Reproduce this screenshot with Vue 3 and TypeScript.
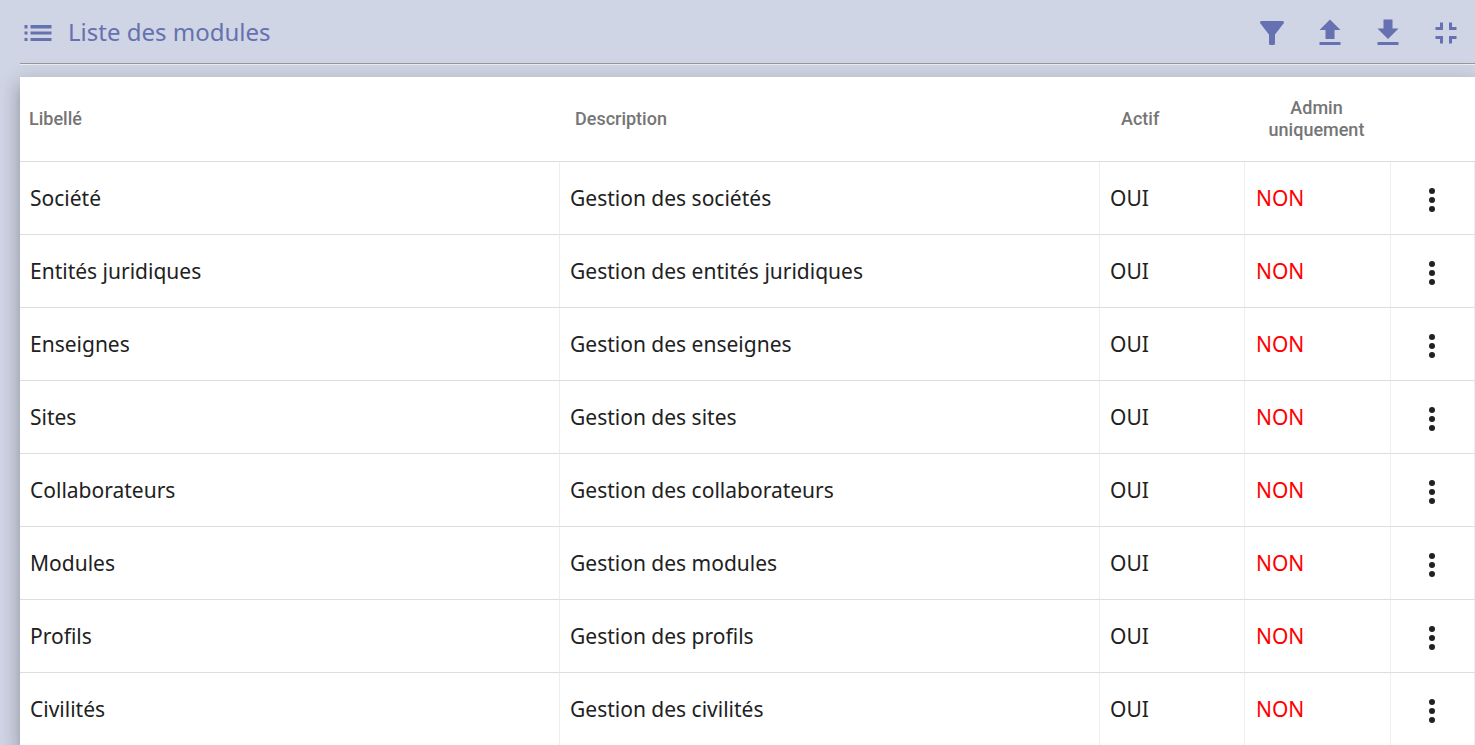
<script setup lang="ts">
interface ModuleRow {
  label: string
  description: string
  active: boolean
  adminOnly: boolean
}

interface Action {
  name: string
  path: string
}

const actions: Action[] = [
  { name: 'Filtrer', path: 'M4.25 5.61C6.27 8.2 10 13 10 13v6c0 .55.45 1 1 1h2c.55 0 1-.45 1-1v-6s3.72-4.8 5.74-7.39A1 1 0 0 0 18.95 4H5.04a1 1 0 0 0-.79 1.61z' },
  { name: 'Importer', path: 'M9 16h6v-6h4l-7-7-7 7h4zm-4 2h14v2H5z' },
  { name: 'Exporter', path: 'M19 9h-4V3H9v6H5l7 7 7-7zM5 18v2h14v-2H5z' },
  { name: 'Réduire', path: 'M5 16h3v3h2v-5H5v2zm3-8H5v2h5V5H8v3zm6 11h2v-3h3v-2h-5v5zm2-11V5h-2v5h5V8h-3z' },
]

const rows: ModuleRow[] = [
  ['Société', 'Gestion des sociétés'],
  ['Entités juridiques', 'Gestion des entités juridiques'],
  ['Enseignes', 'Gestion des enseignes'],
  ['Sites', 'Gestion des sites'],
  ['Collaborateurs', 'Gestion des collaborateurs'],
  ['Modules', 'Gestion des modules'],
  ['Profils', 'Gestion des profils'],
  ['Civilités', 'Gestion des civilités'],
].map(([label, description]) => ({ label, description, active: true, adminOnly: false }))

const yesNo = (value: boolean): string => (value ? 'OUI' : 'NON')
</script>

<template>
  <main class="page">
    <header class="toolbar">
      <svg class="icon" viewBox="0 0 24 24" aria-hidden="true">
        <path d="M3 13h2v-2H3v2zm0 4.300h2v-2H3v2zm0-8.300h2V6.700H3V9zm4 4h14v-2H7v2zm0 4.300h14v-2H7v2zM7 6.700V9h14V6.700H7z" />
      </svg>
      <h1 class="title">Liste des modules</h1>
      <div class="actions">
        <button v-for="a in actions" :key="a.name" class="action" type="button" :aria-label="a.name">
          <svg class="icon" viewBox="0 0 24 24" aria-hidden="true"><path :d="a.path" /></svg>
        </button>
      </div>
    </header>
    <table class="grid">
      <colgroup>
        <col class="c-wide" />
        <col class="c-wide" />
        <col class="c-flag" />
        <col class="c-admin" />
        <col class="c-menu" />
      </colgroup>
      <thead>
        <tr>
          <th scope="col" class="first">Libellé</th>
          <th scope="col">Description</th>
          <th scope="col" class="flag">Actif</th>
          <th scope="col" class="centered">Admin uniquement</th>
          <td></td>
        </tr>
      </thead>
      <tbody>
        <tr v-for="row in rows" :key="row.label">
          <td>{{ row.label }}</td>
          <td>{{ row.description }}</td>
          <td :class="{ no: !row.active }">{{ yesNo(row.active) }}</td>
          <td class="admin" :class="{ no: !row.adminOnly }">{{ yesNo(row.adminOnly) }}</td>
          <td class="menu-cell">
            <button class="more" type="button" :aria-label="'Actions : ' + row.label">
              <svg class="icon" viewBox="0 0 24 24" aria-hidden="true">
                <circle cx="12" cy="6" r="2" />
                <circle cx="12" cy="12" r="2" />
                <circle cx="12" cy="18" r="2" />
              </svg>
            </button>
          </td>
        </tr>
      </tbody>
    </table>
  </main>
</template>

<style>
html {
  background: #d0d5e5;
}
body {
  margin: 0;
  height: 100vh;
  overflow: hidden;
}
</style>

<style scoped>
.page {
  padding-left: 20px;
  font-family: "Noto Sans", sans-serif;
}
.toolbar {
  display: flex;
  align-items: center;
  height: 60px;
  padding-top: 3px;
  margin-bottom: 13px;
  border-bottom: 1px solid #999;
  box-shadow: 0 1px 0 #eee;
  color: #6571b0;
}
.icon {
  display: block;
  width: 36px;
  height: 36px;
  fill: currentColor;
}
.title {
  margin: 0 0 0 12px;
  padding-bottom: 2px;
  font-size: 24px;
  line-height: 32px;
  font-weight: 400;
}
.actions {
  display: flex;
  gap: 22px;
  margin-left: auto;
  padding-right: 11px;
}
.action,
.more {
  padding: 0;
  border: 0;
  background: none;
  color: inherit;
  cursor: pointer;
}
.grid {
  width: 100%;
  table-layout: fixed;
  border-collapse: separate;
  border-spacing: 0;
  background: #fff;
  box-shadow: 0 8px 8px -4px rgba(0, 0, 0, 0.2), 0 12px 16px 2px rgba(0, 0, 0, 0.14), 0 4px 20px 3px rgba(0, 0, 0, 0.12);
}
.c-flag {
  width: 145px;
}
.c-admin {
  width: 146px;
}
.c-menu {
  width: 84px;
}
thead th,
thead td {
  box-sizing: border-box;
  height: 85px;
  padding: 0 15px;
  border-bottom: 1px solid #ddd;
  color: #757575;
  font-family: Roboto, sans-serif;
  font-size: 18px;
  line-height: 22px;
  font-weight: 500;
  text-align: left;
}
thead th.first {
  padding-left: 9px;
}
thead th.flag {
  padding-left: 21px;
}
thead th.centered {
  padding: 0 18px 0 15px;
  text-align: center;
}
tbody td {
  box-sizing: border-box;
  height: 73px;
  padding: 0 10px;
  border-right: 1px solid #eee;
  border-bottom: 1px solid #ddd;
  color: #212121;
  font-size: 21px;
  line-height: 28px;
}
tbody td.admin {
  padding-left: 11px;
}
tbody td.no {
  color: #f00;
}
tbody td.menu-cell {
  padding: 4px 2px 0 0;
}
.more {
  display: block;
  margin: 0 auto;
}
</style>
